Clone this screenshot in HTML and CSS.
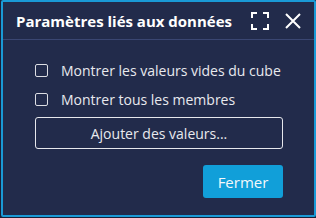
FILE: index.html
```html
<!DOCTYPE html>
<html lang="fr">
<head>
<meta charset="utf-8">
<link rel="stylesheet" href="styles.css">
</head>
<body>
<div class="dialog">
  <div class="header">
    <div class="title">Paramètres liés aux données</div>
    <div class="tools">
      <svg class="icon-max" width="18" height="18" viewBox="0 0 18 18" fill="none" stroke="#fff" stroke-width="2">
        <path d="M1 6V1H6M12 1H17V6M17 12V17H12M6 17H1V12"/>
      </svg>
      <svg class="icon-close" width="16" height="16" viewBox="0 0 16 16" fill="none" stroke="#fff" stroke-width="2">
        <path d="M1 1L15 15M15 1L1 15"/>
      </svg>
    </div>
  </div>
  <div class="body">
    <label class="row"><span class="box"></span><span>Montrer les valeurs vides du cube</span></label>
    <label class="row"><span class="box"></span><span>Montrer tous les membres</span></label>
    <button class="add">Ajouter des valeurs...</button>
    <div class="footer"><button class="close">Fermer</button></div>
  </div>
</div>
</body>
</html>
```
FILE: styles.css
```css
html, body {
  margin: 0;
  padding: 0;
  background: #1b2037;
}
body {
  font-family: "Open Sans", "Noto Sans", sans-serif;
  color: #e8e9ee;
}
.dialog {
  box-sizing: border-box;
  margin-left: 1px;
  width: 315px;
  height: 217px;
  border: 2px solid #1a9ad6;
  border-radius: 2px;
  background: #222b4b;
}
.header {
  height: 37px;
  display: flex;
  align-items: center;
  justify-content: space-between;
  padding: 0 13px 0 13px;
  border-bottom: 1px solid #3a4672;
}
.title {
  font-weight: 700;
  font-size: 15px;
  color: #fff;
  padding-top: 1px;
}
.tools {
  display: flex;
  align-items: center;
  gap: 16px;
}
.icon-max, .icon-close {
  display: block;
}
.body {
  padding: 16px 31px 0 32px;
}
.row {
  display: flex;
  align-items: center;
  height: 29px;
  font-size: 14px;
  gap: 13px;
}
.box {
  box-sizing: border-box;
  width: 13px;
  height: 13px;
  border: 1.5px solid #dcdde3;
  border-radius: 2px;
  flex: none;
}
.add {
  display: block;
  box-sizing: border-box;
  margin-top: 3px;
  width: 100%;
  height: 32px;
  background: transparent;
  border: 1px solid #e6e7ec;
  border-radius: 3px;
  color: #e8e9ee;
  font-family: inherit;
  font-size: 14px;
  padding: 0;
}
.footer {
  display: flex;
  justify-content: flex-end;
  margin-top: 16px;
}
.close {
  width: 80px;
  height: 33px;
  background: #119fd9;
  border: none;
  border-radius: 3px;
  color: #f4f8fb;
  font-family: inherit;
  font-size: 15px;
  padding: 0;
}
```
